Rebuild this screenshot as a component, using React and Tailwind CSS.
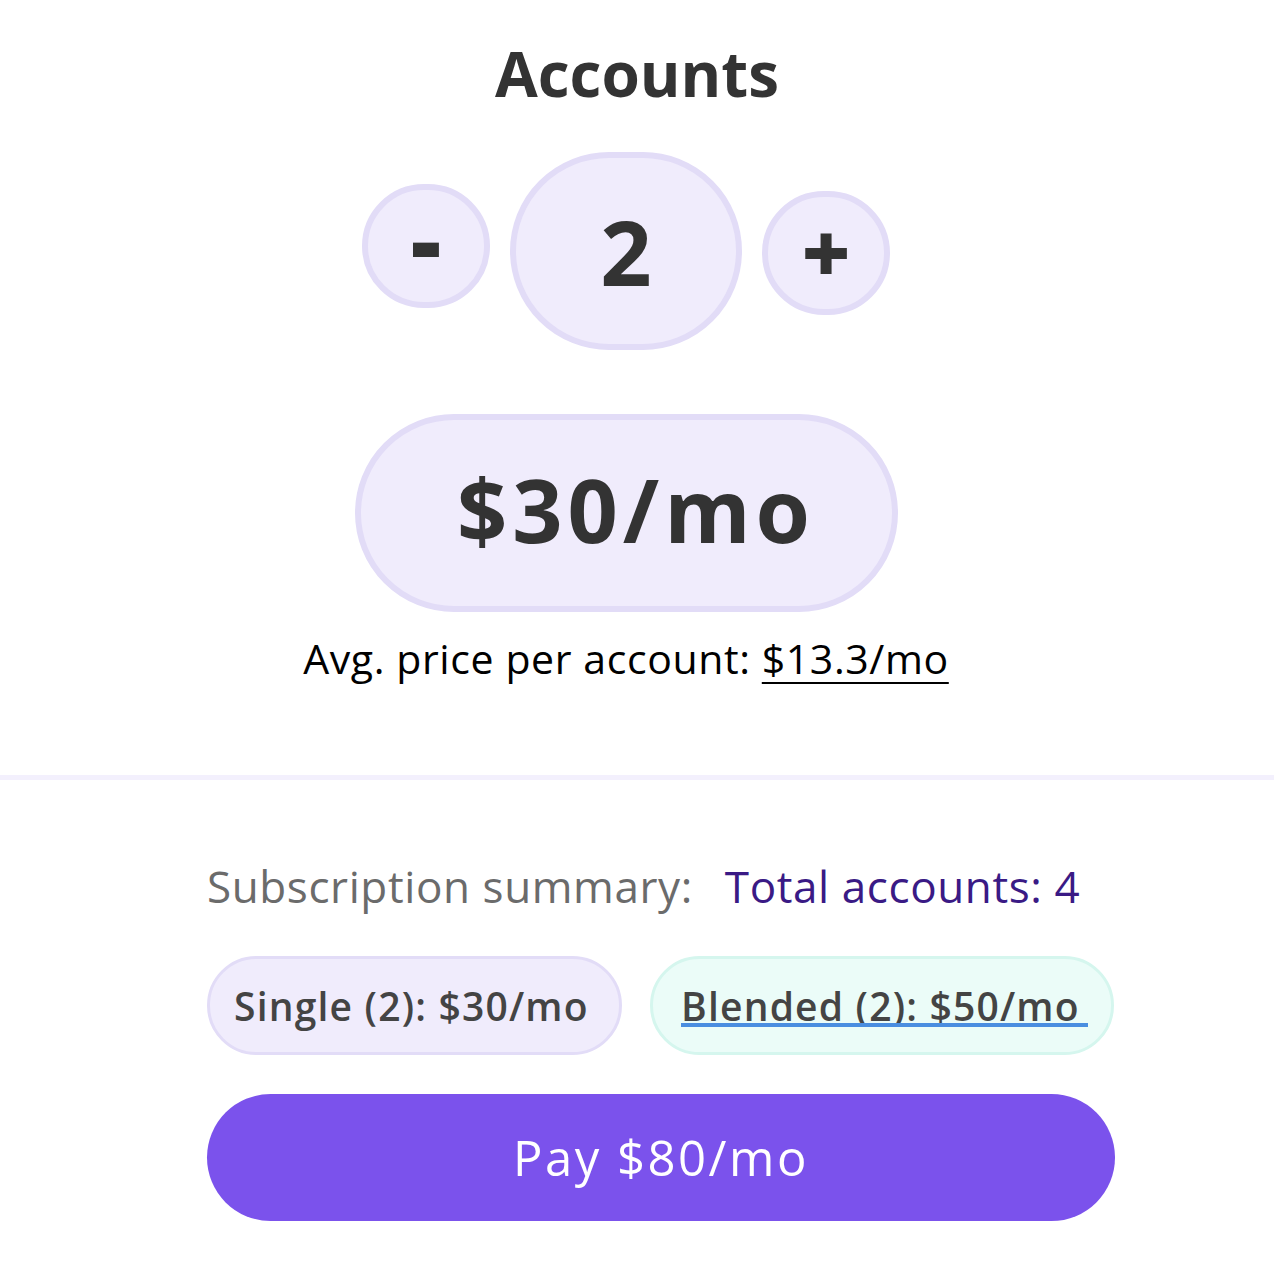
import React from "react";

const App = () => {
  return (
    <div
      className="w-[1274px] h-[1284px] bg-white flex flex-col items-center text-[#333333]"
      style={{ fontFamily: "'Open Sans', Lato, sans-serif" }}
    >
      {/* Title */}
      <h1 className="mt-[42px] text-[62px] font-bold leading-none">Accounts</h1>

      {/* Stepper */}
      <div className="mt-[48px] ml-[-22px] flex items-start gap-5">
        <button className="mt-[32px] w-[128px] h-[124px] rounded-full bg-[#f0ecfc] border-[6px] border-[#e2dcf7] flex items-center justify-center pb-[14px] text-[94px] font-extrabold leading-none">
          -
        </button>
        <div className="w-[232px] h-[198px] rounded-full bg-[#f0ecfc] border-[6px] border-[#e2dcf7] flex items-center justify-center text-[90px] font-bold leading-none">
          2
        </div>
        <button className="mt-[39px] w-[128px] h-[124px] rounded-full bg-[#f0ecfc] border-[6px] border-[#e2dcf7] flex items-center justify-center pb-[4px] text-[84px] font-extrabold leading-none">
          +
        </button>
      </div>

      {/* Price */}
      <div className="mt-[64px] ml-[-22px] w-[543px] h-[198px] rounded-full bg-[#f0ecfc] border-[6px] border-[#e2dcf7] flex items-center justify-center pb-[8px] pl-[20px] text-[88px] font-bold leading-none tracking-[5px]">
        $30/mo
      </div>

      <p className="mt-[26px] ml-[-22px] text-[41px] leading-none tracking-[0.6px] text-black">
        Avg. price per account:{" "}
        <span className="underline decoration-2 underline-offset-[8px]">$13.3/mo</span>
      </p>

      {/* Divider */}
      <div className="mt-[96px] w-full h-[5px] bg-[#f3f0fd]" />

      {/* Summary */}
      <div className="mt-[84px] ml-[48px] w-[908px] flex flex-col">
        <div className="flex items-baseline gap-8 text-[44px] leading-none tracking-[0.6px]">
          <span className="text-[#6b6b6b]">Subscription summary:</span>
          <span className="text-[#3a1a85]">Total accounts: 4</span>
        </div>

        <div className="mt-[48px] flex gap-7">
          <div className="w-[415px] h-[99px] rounded-full bg-[#f0ecfc] border-[3px] border-[#e2dcf7] flex items-center pl-[24px] text-[39px] font-semibold tracking-[1.2px] text-[#444444] leading-none">
            Single (2): $30/mo
          </div>
          <div className="w-[464px] h-[99px] rounded-full bg-[#ebfcf8] border-[3px] border-[#d5f6ee] flex items-center pl-[28px] text-[39px] font-semibold tracking-[1.2px] text-[#444444] leading-none">
            <span className="relative pr-[8px]">
              Blended (2): $50/mo
              <span className="absolute left-0 right-0 bottom-[-2px] h-[4px] bg-[#4a8ee0]" />
            </span>
          </div>
        </div>

        <button className="mt-[39px] w-[908px] h-[127px] rounded-full bg-[#7b52ec] text-white text-[49px] tracking-[2.5px] leading-none">
          Pay $80/mo
        </button>
      </div>
    </div>
  );
};

export default App;
